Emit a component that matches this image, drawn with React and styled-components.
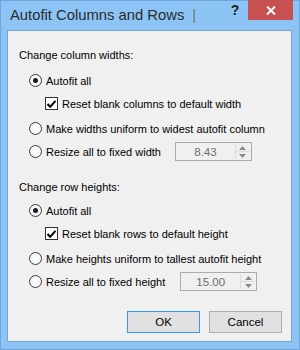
import React from 'react'
import styled, { createGlobalStyle } from 'styled-components';

const GlobalStyle = createGlobalStyle`
  html, body {
    margin: 0;
    padding: 0;
    background: #8cc4f5;
  }
  body {
    font-family: "Liberation Sans", Arial, sans-serif;
  }
`;

const Window = styled.div`
  width: 300px;
  height: 350px;
  box-sizing: border-box;
  border: 1px solid #6ea6dc;
  background: #8cc4f5;
  display: flex;
  flex-direction: column;
  padding: 0 7px 7px 6px;
`;

const TitleBar = styled.div`
  height: 29px;
  display: flex;
  align-items: flex-start;
`;

const Title = styled.div`
  flex: 1;
  padding: 6px 0 0 3px;
  font-size: 14.8px;
  color: #2b2b2b;
  white-space: nowrap;
`;

const Caret = styled.span`
  color: #707070;
  margin-left: 8px;
`;

const HelpButton = styled.div`
  width: 26px;
  height: 20px;
  margin-top: -1px;
  display: flex;
  align-items: center;
  justify-content: center;
  font-weight: bold;
  font-size: 14px;
  color: #1e1e1e;
`;

const CloseButton = styled.div`
  width: 45px;
  height: 20px;
  margin-top: -1px;
  margin-right: -1px;
  background: #c75050;
  display: flex;
  align-items: center;
  justify-content: center;
`;

const Client = styled.div`
  flex: 1;
  border: 1px solid #6fa5da;
  background: #f0f0f0;
  display: flex;
  flex-direction: column;
  padding: 12px 0 0 11px;
  font-size: 11px;
  color: #000;
`;

const Row = styled.div`
  height: 23px;
  display: flex;
  align-items: center;
  margin-top: ${p => p.$gap || 0}px;
  padding-left: ${p => p.$indent || 0}px;
`;

const Radio = styled.span`
  width: 13px;
  height: 13px;
  box-sizing: border-box;
  border-radius: 50%;
  border: 1px solid #3c3c3c;
  background: radial-gradient(circle, #fff 0%, #f0f0f0 100%);
  display: flex;
  align-items: center;
  justify-content: center;
  margin-right: 4px;
  &::after {
    content: '';
    display: ${p => (p.$checked ? 'block' : 'none')};
    width: 5px;
    height: 5px;
    border-radius: 50%;
    background: #1a1a1a;
  }
`;

const Check = styled.span`
  width: 13px;
  height: 13px;
  box-sizing: border-box;
  border: 1px solid #333;
  background: #fff;
  display: flex;
  align-items: center;
  justify-content: center;
  margin-right: 4px;
`;

const Spin = styled.div`
  margin-left: ${p => p.$offset}px;
  width: 77px;
  height: 19px;
  box-sizing: border-box;
  border: 1px solid #acacac;
  background: #f0f0f0;
  display: flex;
`;

const SpinValue = styled.div`
  flex: 1;
  display: flex;
  align-items: center;
  justify-content: center;
  color: #6d6d6d;
  font-size: 11.5px;
`;

const SpinArrows = styled.div`
  width: 14px;
  display: flex;
  flex-direction: column;
  border-left: 1px solid #dcdcdc;
  margin: 1px 1px 1px 0;
`;

const SpinHalf = styled.div`
  flex: 1;
  display: flex;
  align-items: center;
  justify-content: center;
  & + & {
    border-top: 1px solid #dcdcdc;
  }
`;

const Footer = styled.div`
  display: flex;
  justify-content: flex-end;
  gap: 9px;
  margin-top: auto;
  padding: 0 9px 8px 0;
`;

const Button = styled.button`
  width: 73px;
  height: 22px;
  box-sizing: border-box;
  border: 1px solid ${p => (p.$default ? '#3399ff' : '#adadad')};
  background: #e1e1e1;
  font-family: "Liberation Sans", Arial, sans-serif;
  font-size: 11.5px;
  color: #000;
  padding: 0;
`;

const Arrow = ({ up }) => (
  <svg width="7" height="4" viewBox="0 0 7 4">
    <path d={up ? 'M0 4 L3.5 0 L7 4 Z' : 'M0 0 L3.5 4 L7 0 Z'} fill="#8a8a8a" />
  </svg>
);

const SpinBox = ({ value, offset }) => (
  <Spin $offset={offset}>
    <SpinValue>{value}</SpinValue>
    <SpinArrows>
      <SpinHalf><Arrow up /></SpinHalf>
      <SpinHalf><Arrow /></SpinHalf>
    </SpinArrows>
  </Spin>
);

const Tick = () => (
  <svg width="9" height="8" viewBox="0 0 9 8">
    <path d="M0.5 4 L3.2 6.8 L8.5 0.8" fill="none" stroke="#000" strokeWidth="2" />
  </svg>
);

const App = () => {
  return (
    <Window>
      <GlobalStyle />
      <TitleBar>
        <Title>Autofit Columns and Rows<Caret>|</Caret></Title>
        <HelpButton>?</HelpButton>
        <CloseButton>
          <svg width="10" height="9" viewBox="0 0 10 9">
            <path d="M1 0.5 L9 8.5 M9 0.5 L1 8.5" stroke="#fff" strokeWidth="2" />
          </svg>
        </CloseButton>
      </TitleBar>
      <Client>
        <Row>Change column widths:</Row>
        <Row $gap={3} $indent={10}><Radio $checked />Autofit all</Row>
        <Row $indent={26}><Check><Tick /></Check>Reset blank columns to default width</Row>
        <Row $gap={2} $indent={10}><Radio />Make widths uniform to widest autofit column</Row>
        <Row $indent={10}><Radio />Resize all to fixed width<SpinBox value="8.43" offset={14} /></Row>
        <Row $gap={12}>Change row heights:</Row>
        <Row $gap={1} $indent={10}><Radio $checked />Autofit all</Row>
        <Row $indent={26}><Check><Tick /></Check>Reset blank rows to default height</Row>
        <Row $gap={2} $indent={10}><Radio />Make heights uniform to tallest autofit height</Row>
        <Row $indent={10}><Radio />Resize all to fixed height<SpinBox value="15.00" offset={15} /></Row>
        <Footer>
          <Button $default>OK</Button>
          <Button>Cancel</Button>
        </Footer>
      </Client>
    </Window>
  );
};

export default App
